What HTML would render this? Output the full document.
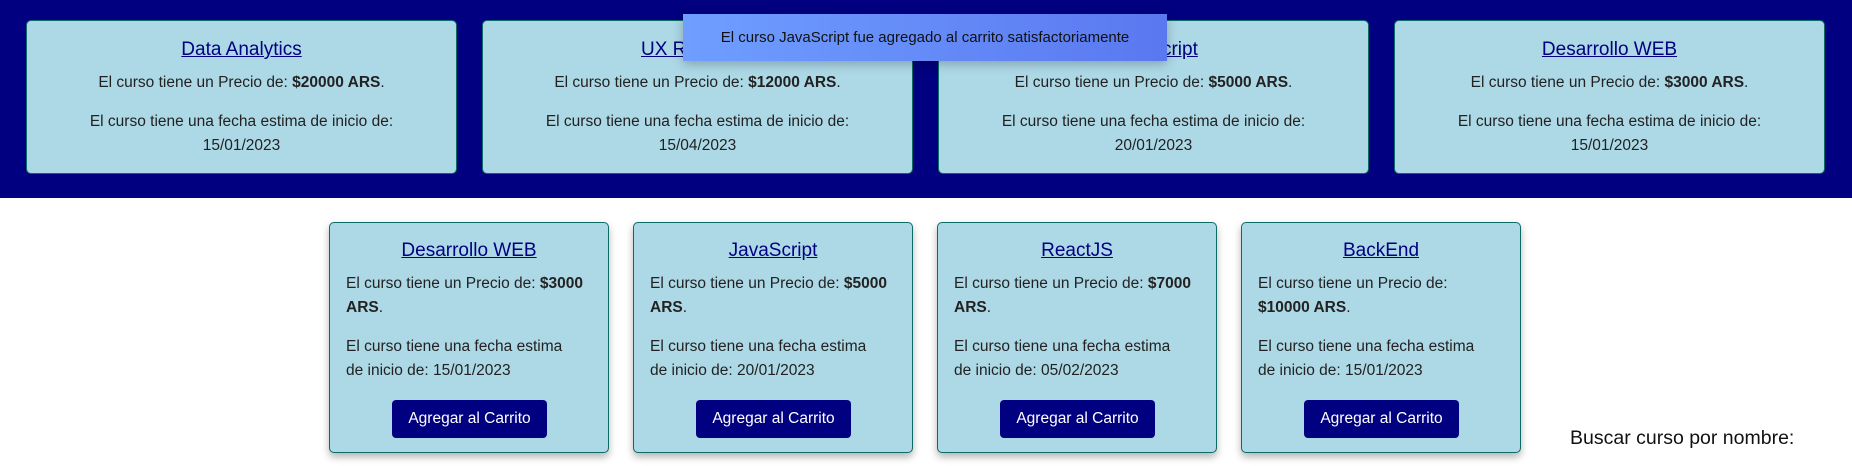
<!DOCTYPE html>
<html><head><meta charset="utf-8"><style>
*{margin:0;padding:0;box-sizing:border-box}
body{width:1852px;height:466px;overflow:hidden;background:#fff;font-family:"Liberation Sans","DejaVu Sans",sans-serif;color:#222;position:relative}
.band{position:absolute;left:0;top:0;width:1852px;height:198px;background:#000080}
.card{position:absolute;background:#add8e6;border:1px solid #0b6b66;border-radius:5px}
.top{top:20px;width:431px;height:154px;text-align:center;font-size:15.5px}
.top .t{position:absolute;left:0;right:0;top:37px;font-size:19px;color:#000080;text-decoration:underline;line-height:24px}
.top .l{position:absolute;left:0;right:0;line-height:24px}
.bot{top:222px;width:280px;height:231px;box-shadow:0 4px 8px rgba(0,0,0,.3);font-size:15.5px}
.bot .t{position:absolute;left:0;right:0;top:16px;text-align:center;font-size:19px;color:#000080;text-decoration:underline;line-height:24px}
.bot .l{position:absolute;left:16px;line-height:24px;white-space:nowrap}
.btn{position:absolute;left:62px;top:177px;width:155px;height:38px;background:#000080;color:#fff;border-radius:4px;text-align:center;line-height:38px;font-size:15.5px}
.toast{position:absolute;left:683px;top:14px;width:484px;height:47px;background:linear-gradient(90deg,#6f9eff,#5a78f0);color:#111;font-size:15px;line-height:47px;text-align:center;box-shadow:0 3px 10px rgba(0,0,0,.25)}
</style></head><body>
<div class="band"></div>
<div class="card top" style="left:26px"><div class="t" style="top:17px">Data Analytics</div><div class="l" style="top:50px">El curso tiene un Precio de: <b>$20000 ARS</b>.</div><div class="l" style="top:89px">El curso tiene una fecha estima de inicio de:</div><div class="l" style="top:113px">15/01/2023</div></div>
<div class="card top" style="left:482px"><div class="t" style="top:17px">UX Research</div><div class="l" style="top:50px">El curso tiene un Precio de: <b>$12000 ARS</b>.</div><div class="l" style="top:89px">El curso tiene una fecha estima de inicio de:</div><div class="l" style="top:113px">15/04/2023</div></div>
<div class="card top" style="left:938px"><div class="t" style="top:17px">JavaScript</div><div class="l" style="top:50px">El curso tiene un Precio de: <b>$5000 ARS</b>.</div><div class="l" style="top:89px">El curso tiene una fecha estima de inicio de:</div><div class="l" style="top:113px">20/01/2023</div></div>
<div class="card top" style="left:1394px"><div class="t" style="top:17px">Desarrollo WEB</div><div class="l" style="top:50px">El curso tiene un Precio de: <b>$3000 ARS</b>.</div><div class="l" style="top:89px">El curso tiene una fecha estima de inicio de:</div><div class="l" style="top:113px">15/01/2023</div></div>
<div class="toast">El curso JavaScript fue agregado al carrito satisfactoriamente</div>

<div class="card bot" style="left:329px"><div class="t">Desarrollo WEB</div><div class="l" style="top:49px">El curso tiene un Precio de: <b>$3000</b></div><div class="l" style="top:73px"><b>ARS</b>.</div><div class="l" style="top:112px">El curso tiene una fecha estima</div><div class="l" style="top:136px">de inicio de: 15/01/2023</div><div class="btn">Agregar al Carrito</div></div>
<div class="card bot" style="left:633px"><div class="t">JavaScript</div><div class="l" style="top:49px">El curso tiene un Precio de: <b>$5000</b></div><div class="l" style="top:73px"><b>ARS</b>.</div><div class="l" style="top:112px">El curso tiene una fecha estima</div><div class="l" style="top:136px">de inicio de: 20/01/2023</div><div class="btn">Agregar al Carrito</div></div>
<div class="card bot" style="left:937px"><div class="t">ReactJS</div><div class="l" style="top:49px">El curso tiene un Precio de: <b>$7000</b></div><div class="l" style="top:73px"><b>ARS</b>.</div><div class="l" style="top:112px">El curso tiene una fecha estima</div><div class="l" style="top:136px">de inicio de: 05/02/2023</div><div class="btn">Agregar al Carrito</div></div>
<div class="card bot" style="left:1241px"><div class="t">BackEnd</div><div class="l" style="top:49px">El curso tiene un Precio de:</div><div class="l" style="top:73px"><b>$10000 ARS</b>.</div><div class="l" style="top:112px">El curso tiene una fecha estima</div><div class="l" style="top:136px">de inicio de: 15/01/2023</div><div class="btn">Agregar al Carrito</div></div>
<div style="position:absolute;left:1570px;top:426px;font-size:19.5px;line-height:24px;color:#111">Buscar curso por nombre:</div>
</body></html>
